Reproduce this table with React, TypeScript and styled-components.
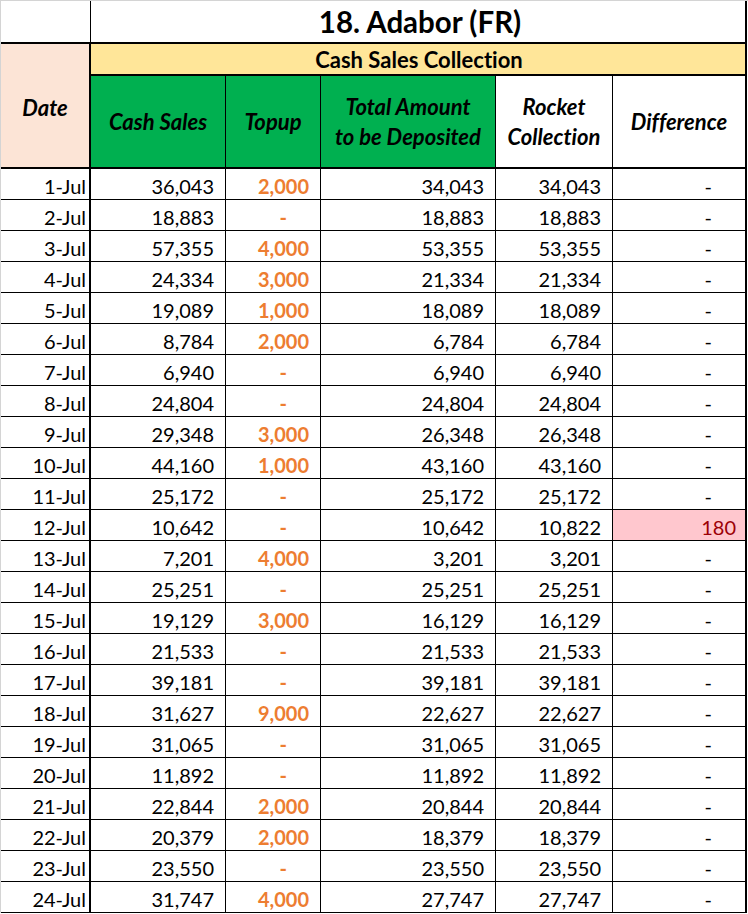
import React from 'react';
import styled, { createGlobalStyle, css } from 'styled-components';

type Row = {
  date: string;
  cash: number;
  topup: number;
  rocket: number;
};

const rows: Row[] = [
  { date: '1-Jul', cash: 36043, topup: 2000, rocket: 34043 },
  { date: '2-Jul', cash: 18883, topup: 0, rocket: 18883 },
  { date: '3-Jul', cash: 57355, topup: 4000, rocket: 53355 },
  { date: '4-Jul', cash: 24334, topup: 3000, rocket: 21334 },
  { date: '5-Jul', cash: 19089, topup: 1000, rocket: 18089 },
  { date: '6-Jul', cash: 8784, topup: 2000, rocket: 6784 },
  { date: '7-Jul', cash: 6940, topup: 0, rocket: 6940 },
  { date: '8-Jul', cash: 24804, topup: 0, rocket: 24804 },
  { date: '9-Jul', cash: 29348, topup: 3000, rocket: 26348 },
  { date: '10-Jul', cash: 44160, topup: 1000, rocket: 43160 },
  { date: '11-Jul', cash: 25172, topup: 0, rocket: 25172 },
  { date: '12-Jul', cash: 10642, topup: 0, rocket: 10822 },
  { date: '13-Jul', cash: 7201, topup: 4000, rocket: 3201 },
  { date: '14-Jul', cash: 25251, topup: 0, rocket: 25251 },
  { date: '15-Jul', cash: 19129, topup: 3000, rocket: 16129 },
  { date: '16-Jul', cash: 21533, topup: 0, rocket: 21533 },
  { date: '17-Jul', cash: 39181, topup: 0, rocket: 39181 },
  { date: '18-Jul', cash: 31627, topup: 9000, rocket: 22627 },
  { date: '19-Jul', cash: 31065, topup: 0, rocket: 31065 },
  { date: '20-Jul', cash: 11892, topup: 0, rocket: 11892 },
  { date: '21-Jul', cash: 22844, topup: 2000, rocket: 20844 },
  { date: '22-Jul', cash: 20379, topup: 2000, rocket: 18379 },
  { date: '23-Jul', cash: 23550, topup: 0, rocket: 23550 },
  { date: '24-Jul', cash: 31747, topup: 4000, rocket: 27747 },
];

const fmt = (n: number) => (n === 0 ? '-' : n.toLocaleString('en-US'));

const GlobalStyle = createGlobalStyle`
  html, body {
    margin: 0;
    padding: 0;
    background: #ffffff;
  }
  body {
    font-family: Lato, "Open Sans", sans-serif;
    font-variant-ligatures: none;
    color: #000000;
  }
`;

const Sheet = styled.div`
  display: grid;
  grid-template-columns: 90px 135px 95px 175px 117px 134px;
  grid-template-rows: 43px 32px 93px repeat(24, 31px);
  width: 747px;
  border-top: 1px solid #d4d4d4;
  border-left: 1px solid #d4d4d4;
`;

const cellBase = css`
  box-sizing: border-box;
  display: flex;
  border-right: 1px solid #000;
  border-bottom: 1px solid #000;
  min-width: 0;
  white-space: nowrap;
`;

const Corner = styled.div`
  ${cellBase};
  border-bottom-width: 2px;
`;

const Title = styled.div`
  ${cellBase};
  grid-column: 2 / 7;
  border-right-width: 2px;
  border-bottom-width: 2px;
  align-items: center;
  justify-content: center;
  padding-left: 4px;
  font-size: 29.5px;
  font-weight: 700;
`;

const DateHead = styled.div`
  ${cellBase};
  grid-row: 2 / 4;
  border-right-width: 2px;
  border-bottom-width: 2px;
  background: #fce4d6;
  align-items: center;
  justify-content: center;
  padding-top: 3px;
  font-size: 22px;
  font-weight: 700;
  font-style: italic;
`;

const Group = styled.div`
  ${cellBase};
  grid-column: 2 / 7;
  border-right-width: 2px;
  border-bottom-width: 2px;
  background: #ffe699;
  align-items: center;
  justify-content: center;
  padding-left: 2px;
  font-size: 22px;
  font-weight: 700;
`;

const HeadCell = styled.div<{ $green?: boolean; $last?: boolean }>`
  ${cellBase};
  border-bottom-width: 2px;
  border-right-width: ${(p) => (p.$last ? 2 : 1)}px;
  background: ${(p) => (p.$green ? '#00b050' : '#ffffff')};
  align-items: center;
  justify-content: center;
  text-align: center;
  font-size: 22px;
  line-height: 30px;
  font-weight: 700;
  font-style: italic;
  white-space: normal;
`;

const DateCell = styled.div`
  ${cellBase};
  border-right-width: 2px;
  align-items: flex-end;
  justify-content: flex-end;
  padding: 0 3px 1px 0;
  font-size: 20px;
  line-height: 24px;
`;

type Tone = 'plain' | 'orange' | 'bad';

const NumCell = styled.div<{ $tone?: Tone; $dash?: boolean; $last?: boolean }>`
  ${cellBase};
  border-right-width: ${(p) => (p.$last ? 2 : 1)}px;
  align-items: flex-end;
  justify-content: flex-end;
  padding-bottom: 1px;
  padding-right: ${(p) => (p.$dash ? 33 : p.$last ? 9 : 11)}px;
  font-size: 20px;
  line-height: 24px;
  ${(p) =>
    p.$tone === 'orange' &&
    css`
      color: #ed7d31;
      font-weight: 700;
    `}
  ${(p) =>
    p.$tone === 'bad' &&
    css`
      color: #9c0006;
      background: #ffc7ce;
    `}
`;

export default function App() {
  return (
    <>
      <GlobalStyle />
      <Sheet>
        <Corner style={{ borderRightWidth: 1 }} />
        <Title>18. Adabor (FR)</Title>
        <DateHead>Date</DateHead>
        <Group>Cash Sales Collection</Group>
        <HeadCell $green>Cash Sales</HeadCell>
        <HeadCell $green>Topup</HeadCell>
        <HeadCell $green>
          Total Amount
          <br />
          to be Deposited
        </HeadCell>
        <HeadCell>
          Rocket
          <br />
          Collection
        </HeadCell>
        <HeadCell $last>Difference</HeadCell>

        {rows.map((r) => {
          const total = r.cash - r.topup;
          const diff = r.rocket - total;
          return (
            <React.Fragment key={r.date}>
              <DateCell>{r.date}</DateCell>
              <NumCell>{fmt(r.cash)}</NumCell>
              <NumCell $tone="orange" $dash={r.topup === 0}>
                {fmt(r.topup)}
              </NumCell>
              <NumCell>{fmt(total)}</NumCell>
              <NumCell>{fmt(r.rocket)}</NumCell>
              <NumCell $last $dash={diff === 0} $tone={diff !== 0 ? 'bad' : 'plain'}>
                {fmt(diff)}
              </NumCell>
            </React.Fragment>
          );
        })}
      </Sheet>
    </>
  );
}
